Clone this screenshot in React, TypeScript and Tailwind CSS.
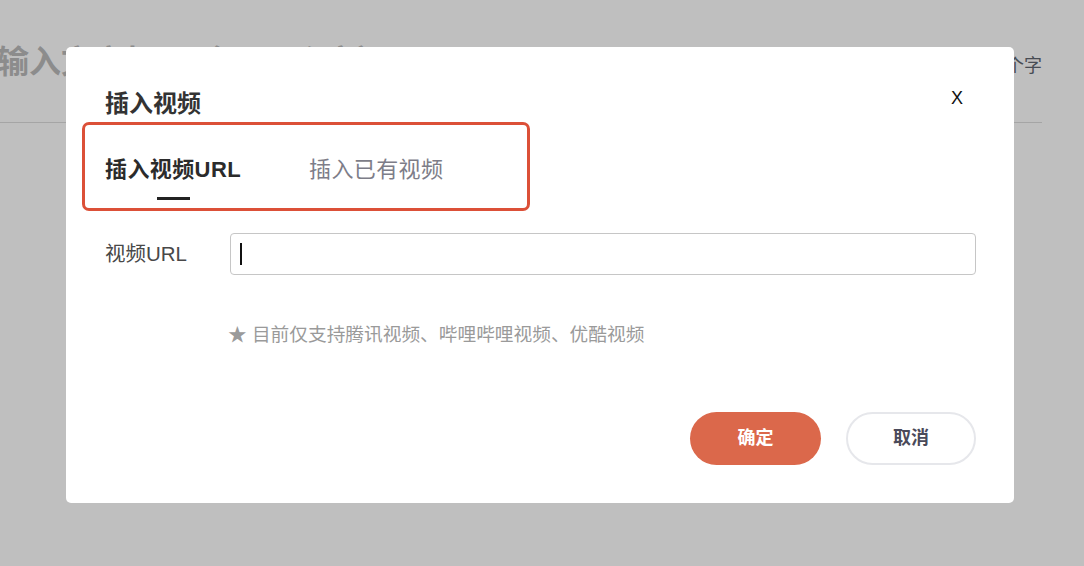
import React from 'react';

const FONT = "font-['Liberation_Sans','Noto_Sans_CJK_SC',sans-serif]";

const BackgroundPage = () => {
  return (
    <div className="flex flex-col w-[1084px]">
      <div className="h-[123px] w-[1042px] border-b border-[#dcdcdc] flex items-start justify-between">
        <div className="-ml-[3px] mt-[42px] text-[32px] leading-[40px] font-bold text-[#bbbbbb]">
          输入文章标题（5~30个字）
        </div>
        <div className="mt-[54px] text-[18px] leading-[24px] text-[#5f6670]">0/30个字</div>
      </div>
    </div>
  );
};

const Tabs = () => {
  return (
    <div className="flex items-start gap-[68px] mt-[35px]">
      <div className="flex flex-col items-center">
        <span className="text-[22px] leading-[30px] tracking-[0.4px] font-bold text-[#2b2b2b]">插入视频URL</span>
        <span className="mt-[12px] h-[3px] w-[33px] bg-[#222222]" />
      </div>
      <span className="text-[22px] leading-[30px] tracking-[0.4px] text-[#7d7d88]">插入已有视频</span>
    </div>
  );
};

const VideoDialog = () => {
  return (
    <div className="absolute left-[66px] top-[47px] w-[948px] h-[456px] bg-white rounded-[5px] pl-[39px] pr-[38px] pt-[41px] flex flex-col">
      <div className="flex items-start justify-between">
        <h3 className="text-[24px] leading-[32px] font-bold text-[#333333]">插入视频</h3>
        <button className="mr-[13px] text-[18px] leading-[20px] text-[#111111] font-['Liberation_Sans',sans-serif]">X</button>
      </div>

      <Tabs />

      <div className="flex items-center mt-[33px]">
        <label className="w-[125px] text-[20.5px] leading-[24px] text-[#484848]">视频URL</label>
        <div className="flex-1 h-[42px] border border-[#c6c6c6] rounded-[4px] flex items-center pl-[9px]">
          <span className="h-[22px] w-[2px] bg-[#111111]" />
        </div>
      </div>

      <p className="mt-[48px] ml-[123px] text-[18.7px] leading-[24px] text-[#9a9a9a]">★ 目前仅支持腾讯视频、哔哩哔哩视频、优酷视频</p>

      <div className="flex justify-end gap-[25px] mt-[65px]">
        <button className="w-[131px] h-[53px] rounded-full bg-[#db684b] text-white text-[18px] font-bold">确定</button>
        <button className="w-[130px] h-[53px] rounded-full border-2 border-[#e6e7eb] bg-white text-[#4a4a5a] text-[18px] font-bold">取消</button>
      </div>

      <div className="absolute left-[16px] top-[75px] w-[448px] h-[89px] border-[3px] border-[#dc5038] rounded-[7px]" />
    </div>
  );
};

export default function App() {
  return (
    <div className={`relative w-[1084px] h-[566px] overflow-hidden bg-white ${FONT}`}>
      <BackgroundPage />
      <div className="absolute inset-0 bg-black/25" />
      <VideoDialog />
    </div>
  );
}
